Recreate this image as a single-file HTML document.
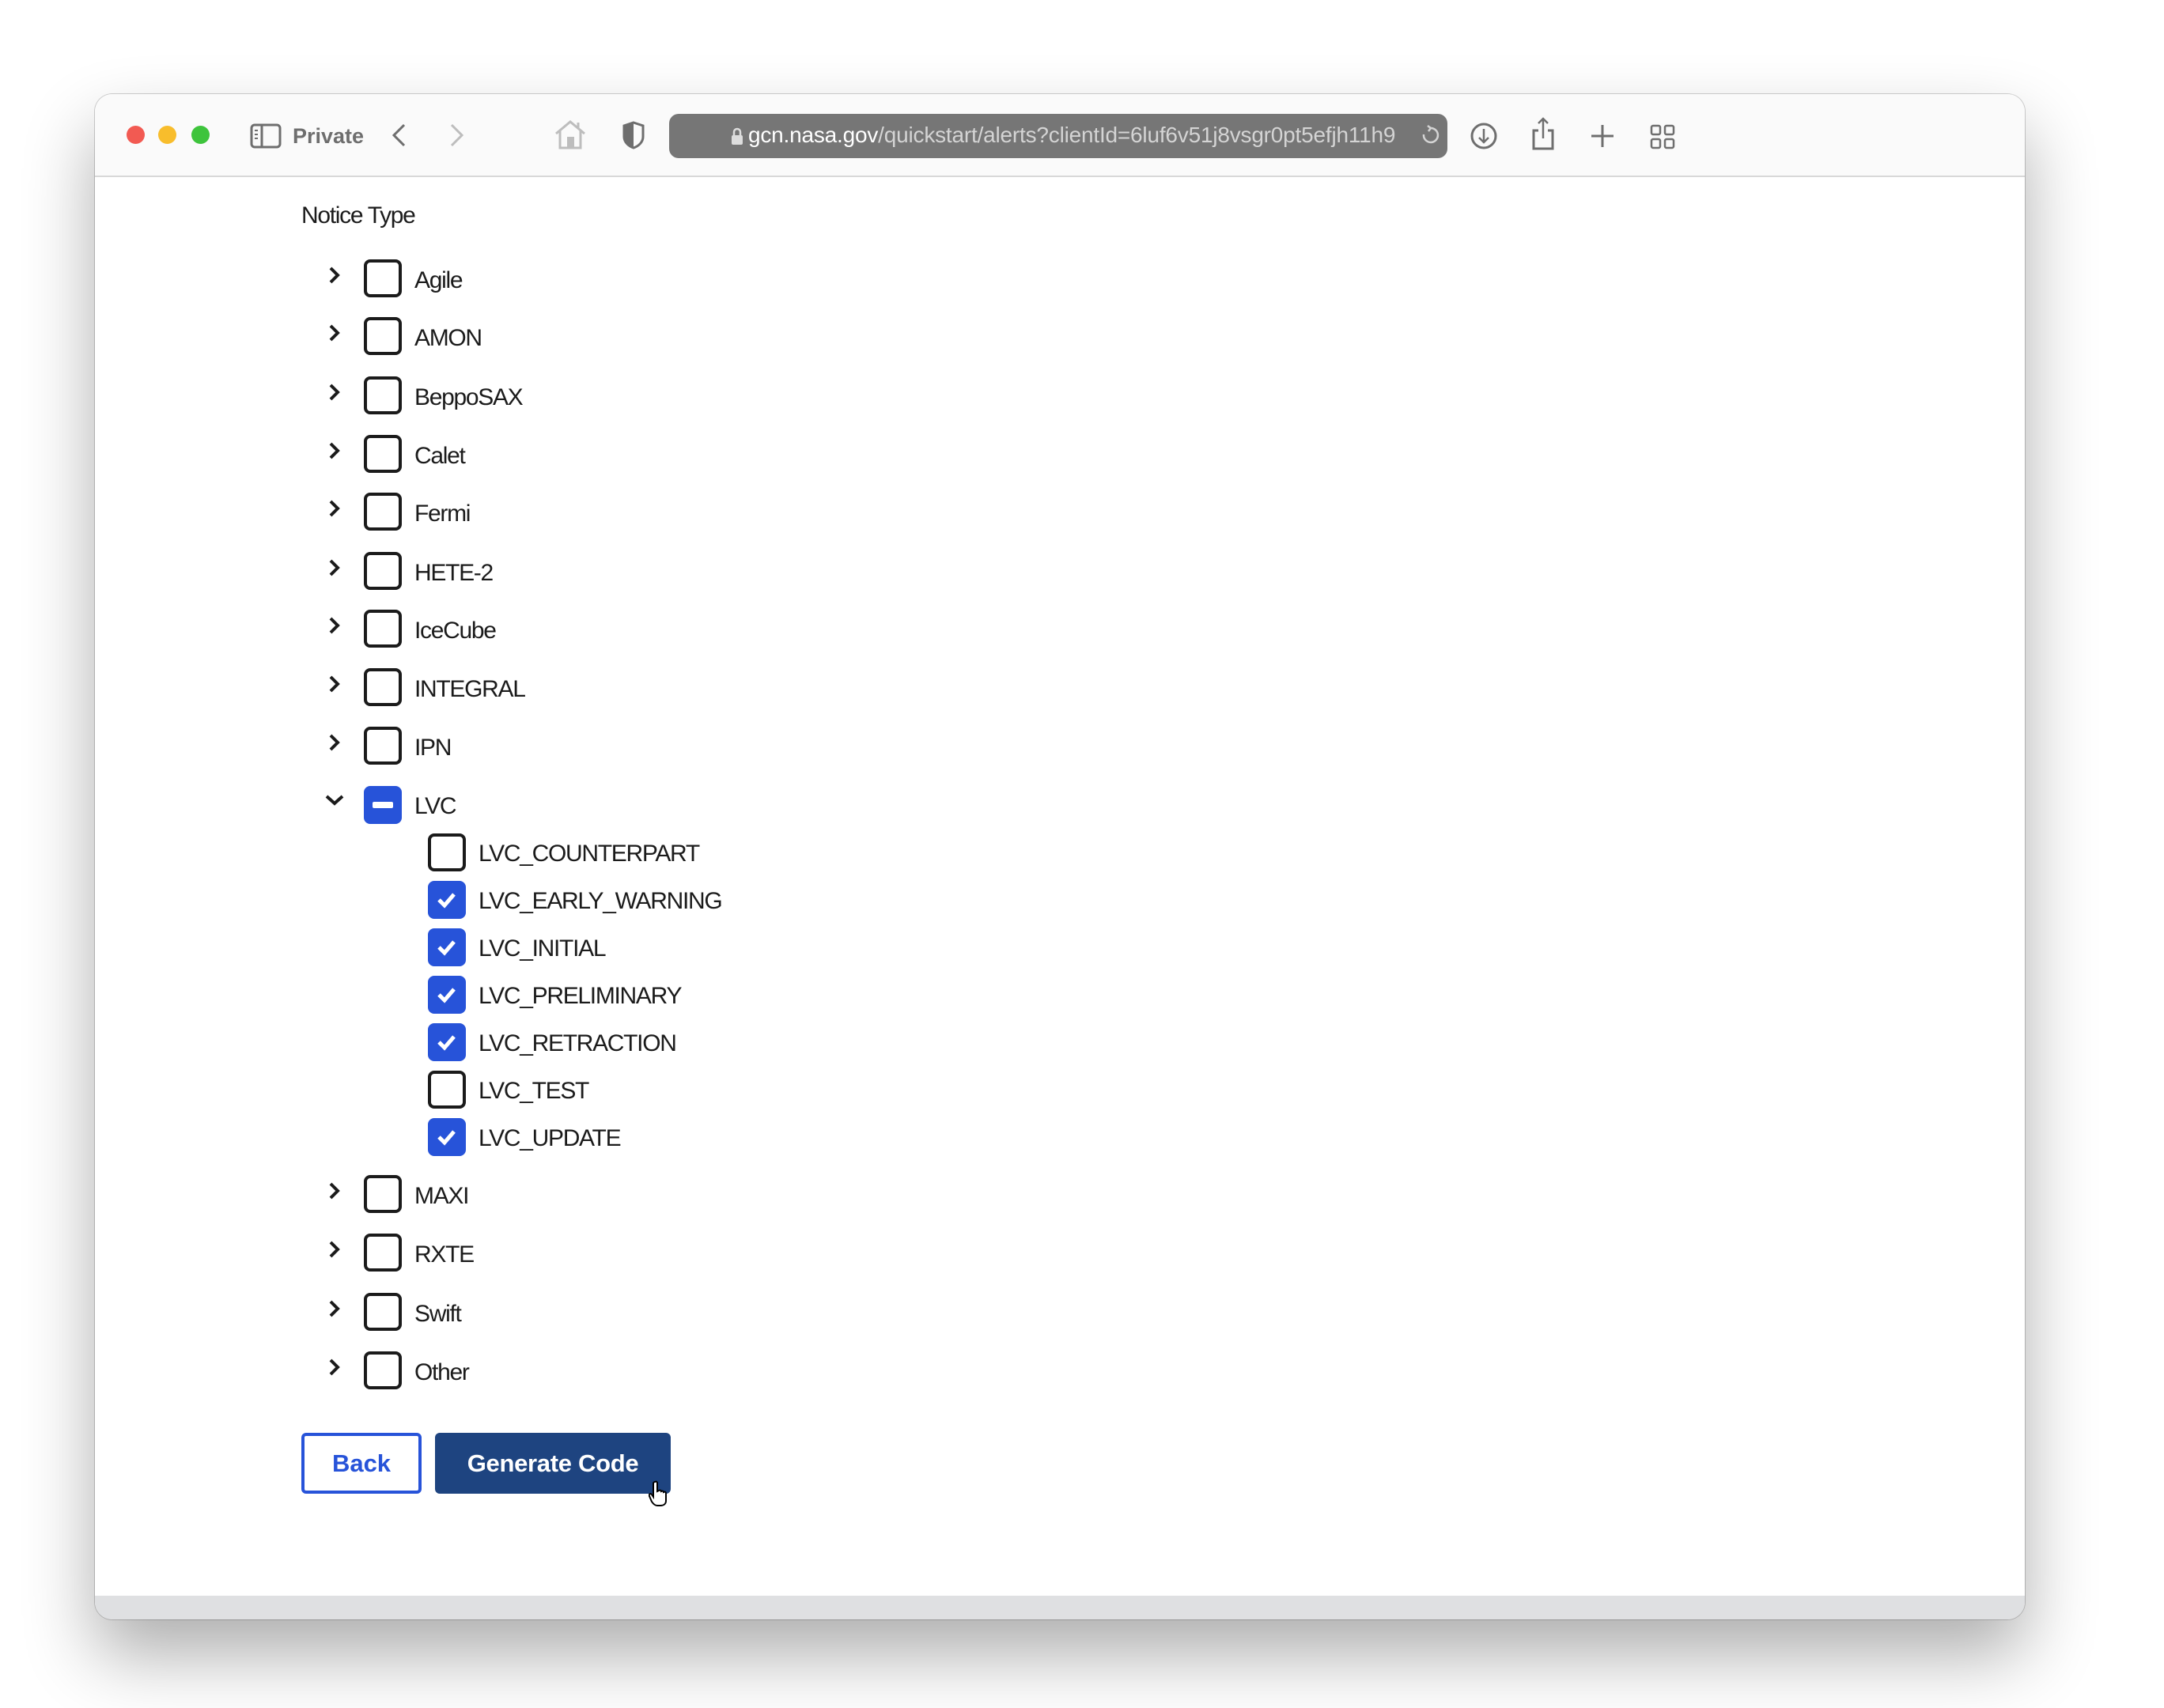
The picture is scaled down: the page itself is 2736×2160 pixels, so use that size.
<!DOCTYPE html>
<html><head><meta charset="utf-8"><style>
*{margin:0;padding:0;box-sizing:border-box}
body{width:2736px;height:2160px;background:#fff;position:relative;overflow:hidden;font-family:"Liberation Sans",sans-serif}
.win{position:absolute;left:120px;top:119px;width:2440px;height:1929px;border-radius:22px;background:#fff;box-shadow:0 45px 90px rgba(0,0,0,0.32),0 0 0 1px rgba(0,0,0,0.18);overflow:hidden}
.tb{position:absolute;left:0;top:0;width:100%;height:105px;background:#fafafa;border-bottom:2px solid #d8d8d8}
.dot{position:absolute;top:40px;width:23px;height:23px;border-radius:50%}
.url{position:absolute;left:726px;top:25px;width:984px;height:56px;background:#767676;border-radius:12px}
.urltext{position:absolute;left:100px;top:11px;font-size:28px;color:#d4d4d4;white-space:nowrap;letter-spacing:-0.2px}
.urltext b{color:#fff;font-weight:normal}
.bottom{position:absolute;left:0;top:1899px;width:100%;height:30px;background:#dfe0e2}
.t{position:absolute;font-size:30px;color:#1b1b1b;letter-spacing:-1.3px;line-height:36px;margin-top:3px}
.cb{position:absolute;width:48px;height:48px;border:4px solid #1b1b1b;border-radius:8px}
.cb.on{background:#2753d9;border-color:#2753d9}
.chev{position:absolute}
.btn{position:absolute;font-weight:bold;font-size:31px;text-align:center;border-radius:6px}
</style></head><body>
<div class="win">
 <div class="tb">
  <div class="dot" style="left:40px;background:#f25a52"></div>
  <div class="dot" style="left:80px;background:#f8bd2c"></div>
  <div class="dot" style="left:122px;background:#3ec43c"></div>
  <svg style="position:absolute;left:196px;top:37px" width="40" height="32" viewBox="0 0 40 32"><rect x="2" y="2" width="36" height="28" rx="4" fill="none" stroke="#6e6e6e" stroke-width="3"/><line x1="15" y1="2" x2="15" y2="30" stroke="#6e6e6e" stroke-width="3"/><line x1="6" y1="9" x2="10" y2="9" stroke="#6e6e6e" stroke-width="2"/><line x1="6" y1="14" x2="10" y2="14" stroke="#6e6e6e" stroke-width="2"/><line x1="6" y1="19" x2="10" y2="19" stroke="#6e6e6e" stroke-width="2"/></svg>
  <div style="position:absolute;left:250px;top:38px;font-size:27px;font-weight:bold;color:#6e6e6e">Private</div>
  <svg style="position:absolute;left:374px;top:37px" width="22" height="30"><polyline points="17,2 4,15 17,28" fill="none" stroke="#6e6e6e" stroke-width="3"/></svg>
  <svg style="position:absolute;left:446px;top:37px" width="22" height="30"><polyline points="5,2 18,15 5,28" fill="none" stroke="#bdbdbd" stroke-width="3"/></svg>
  <svg style="position:absolute;left:580px;top:32px" width="42" height="38" viewBox="0 0 42 38"><polyline points="3,18 21,3 39,18" fill="none" stroke="#bdbdbd" stroke-width="3"/><polyline points="8,14 8,36 34,36 34,14" fill="none" stroke="#bdbdbd" stroke-width="3"/><rect x="17" y="22" width="9" height="14" fill="#bdbdbd"/><line x1="31" y1="4" x2="31" y2="12" stroke="#bdbdbd" stroke-width="3"/></svg>
  <svg style="position:absolute;left:666px;top:34px" width="30" height="36" viewBox="0 0 30 36"><path d="M15 2 L27 6 L27 20 C27 27 21 32 15 34 C9 32 3 27 3 20 L3 6 Z" fill="none" stroke="#6e6e6e" stroke-width="3"/><path d="M15 2 L3 6 L3 20 C3 27 9 32 15 34 Z" fill="#6e6e6e"/></svg>
  <div class="url">
   <svg style="position:absolute;left:78px;top:16px" width="16" height="24" viewBox="0 0 16 24"><path d="M4 11 V7 a4 4 0 0 1 8 0 V11" fill="none" stroke="#ddd" stroke-width="2.5"/><rect x="1" y="11" width="14" height="12" rx="2" fill="#ddd"/></svg>
   <div class="urltext"><b>gcn.nasa.gov</b>/quickstart/alerts?clientId=6luf6v51j8vsgr0pt5efjh11h9</div>
   <svg style="position:absolute;left:950px;top:14px" width="24" height="28" viewBox="0 0 24 28"><path d="M12 4 A9 9 0 1 1 4 12" fill="none" stroke="#d4d4d4" stroke-width="2.5"/><polyline points="9,1 13,4 10,8" fill="none" stroke="#d4d4d4" stroke-width="2.5"/></svg>
  </div>
  <svg style="position:absolute;left:1738px;top:35px" width="36" height="36"><circle cx="18" cy="18" r="15" fill="none" stroke="#6e6e6e" stroke-width="3"/><line x1="18" y1="9" x2="18" y2="26" stroke="#6e6e6e" stroke-width="2.5"/><polyline points="12,20 18,26 24,20" fill="none" stroke="#6e6e6e" stroke-width="2.5"/></svg>
  <svg style="position:absolute;left:1815px;top:28px" width="32" height="44"><polyline points="10,18 4,18 4,41 28,41 28,18 22,18" fill="none" stroke="#6e6e6e" stroke-width="3"/><line x1="16" y1="3" x2="16" y2="28" stroke="#6e6e6e" stroke-width="2.5"/><polyline points="10,9 16,3 22,9" fill="none" stroke="#6e6e6e" stroke-width="2.5"/></svg>
  <svg style="position:absolute;left:1891px;top:38px" width="30" height="30"><line x1="15" y1="1" x2="15" y2="29" stroke="#6e6e6e" stroke-width="3"/><line x1="1" y1="15" x2="29" y2="15" stroke="#6e6e6e" stroke-width="3"/></svg>
  <svg style="position:absolute;left:1966px;top:38px" width="32" height="32"><rect x="2" y="2" width="11" height="11" rx="2" fill="none" stroke="#6e6e6e" stroke-width="2.5"/><rect x="19" y="2" width="11" height="11" rx="2" fill="none" stroke="#6e6e6e" stroke-width="2.5"/><rect x="2" y="19" width="11" height="11" rx="2" fill="none" stroke="#6e6e6e" stroke-width="2.5"/><rect x="19" y="19" width="11" height="11" rx="2" fill="none" stroke="#6e6e6e" stroke-width="2.5"/></svg>
 </div>
 <div class="bottom"></div>
</div>
<div class="t" style="left:381px;top:252px">Notice Type</div>

<svg class="chev" style="left:415px;top:336px" width="16" height="24"><polyline points="3,3 12,12 3,21" fill="none" stroke="#1b1b1b" stroke-width="4"/></svg><div class="cb" style="left:460px;top:328px"></div><div class="t" style="left:524px;top:334px">Agile</div>
<svg class="chev" style="left:415px;top:409px" width="16" height="24"><polyline points="3,3 12,12 3,21" fill="none" stroke="#1b1b1b" stroke-width="4"/></svg><div class="cb" style="left:460px;top:401px"></div><div class="t" style="left:524px;top:407px">AMON</div>
<svg class="chev" style="left:415px;top:484px" width="16" height="24"><polyline points="3,3 12,12 3,21" fill="none" stroke="#1b1b1b" stroke-width="4"/></svg><div class="cb" style="left:460px;top:476px"></div><div class="t" style="left:524px;top:482px">BeppoSAX</div>
<svg class="chev" style="left:415px;top:558px" width="16" height="24"><polyline points="3,3 12,12 3,21" fill="none" stroke="#1b1b1b" stroke-width="4"/></svg><div class="cb" style="left:460px;top:550px"></div><div class="t" style="left:524px;top:556px">Calet</div>
<svg class="chev" style="left:415px;top:631px" width="16" height="24"><polyline points="3,3 12,12 3,21" fill="none" stroke="#1b1b1b" stroke-width="4"/></svg><div class="cb" style="left:460px;top:623px"></div><div class="t" style="left:524px;top:629px">Fermi</div>
<svg class="chev" style="left:415px;top:706px" width="16" height="24"><polyline points="3,3 12,12 3,21" fill="none" stroke="#1b1b1b" stroke-width="4"/></svg><div class="cb" style="left:460px;top:698px"></div><div class="t" style="left:524px;top:704px">HETE-2</div>
<svg class="chev" style="left:415px;top:779px" width="16" height="24"><polyline points="3,3 12,12 3,21" fill="none" stroke="#1b1b1b" stroke-width="4"/></svg><div class="cb" style="left:460px;top:771px"></div><div class="t" style="left:524px;top:777px">IceCube</div>
<svg class="chev" style="left:415px;top:853px" width="16" height="24"><polyline points="3,3 12,12 3,21" fill="none" stroke="#1b1b1b" stroke-width="4"/></svg><div class="cb" style="left:460px;top:845px"></div><div class="t" style="left:524px;top:851px">INTEGRAL</div>
<svg class="chev" style="left:415px;top:927px" width="16" height="24"><polyline points="3,3 12,12 3,21" fill="none" stroke="#1b1b1b" stroke-width="4"/></svg><div class="cb" style="left:460px;top:919px"></div><div class="t" style="left:524px;top:925px">IPN</div>
<svg class="chev" style="left:410px;top:1004px" width="26" height="16"><polyline points="3,3 13,12 23,3" fill="none" stroke="#1b1b1b" stroke-width="4"/></svg><div class="cb on" style="left:460px;top:994px"><div style="position:absolute;left:7px;top:16px;width:26px;height:8px;background:#fff;border-radius:2px"></div></div><div class="t" style="left:524px;top:999px">LVC</div>

<div class="cb" style="left:541px;top:1054px"></div><div class="t" style="left:605px;top:1059px">LVC_COUNTERPART</div>
<div class="cb on" style="left:541px;top:1114px"><svg width="40" height="40" style="position:absolute;left:0;top:0"><polyline points="10,20 17,27 29,13" fill="none" stroke="#fff" stroke-width="5"/></svg></div><div class="t" style="left:605px;top:1119px">LVC_EARLY_WARNING</div>
<div class="cb on" style="left:541px;top:1174px"><svg width="40" height="40" style="position:absolute;left:0;top:0"><polyline points="10,20 17,27 29,13" fill="none" stroke="#fff" stroke-width="5"/></svg></div><div class="t" style="left:605px;top:1179px">LVC_INITIAL</div>
<div class="cb on" style="left:541px;top:1234px"><svg width="40" height="40" style="position:absolute;left:0;top:0"><polyline points="10,20 17,27 29,13" fill="none" stroke="#fff" stroke-width="5"/></svg></div><div class="t" style="left:605px;top:1239px">LVC_PRELIMINARY</div>
<div class="cb on" style="left:541px;top:1294px"><svg width="40" height="40" style="position:absolute;left:0;top:0"><polyline points="10,20 17,27 29,13" fill="none" stroke="#fff" stroke-width="5"/></svg></div><div class="t" style="left:605px;top:1299px">LVC_RETRACTION</div>
<div class="cb" style="left:541px;top:1354px"></div><div class="t" style="left:605px;top:1359px">LVC_TEST</div>
<div class="cb on" style="left:541px;top:1414px"><svg width="40" height="40" style="position:absolute;left:0;top:0"><polyline points="10,20 17,27 29,13" fill="none" stroke="#fff" stroke-width="5"/></svg></div><div class="t" style="left:605px;top:1419px">LVC_UPDATE</div>

<svg class="chev" style="left:415px;top:1494px" width="16" height="24"><polyline points="3,3 12,12 3,21" fill="none" stroke="#1b1b1b" stroke-width="4"/></svg><div class="cb" style="left:460px;top:1486px"></div><div class="t" style="left:524px;top:1492px">MAXI</div>
<svg class="chev" style="left:415px;top:1568px" width="16" height="24"><polyline points="3,3 12,12 3,21" fill="none" stroke="#1b1b1b" stroke-width="4"/></svg><div class="cb" style="left:460px;top:1560px"></div><div class="t" style="left:524px;top:1566px">RXTE</div>
<svg class="chev" style="left:415px;top:1643px" width="16" height="24"><polyline points="3,3 12,12 3,21" fill="none" stroke="#1b1b1b" stroke-width="4"/></svg><div class="cb" style="left:460px;top:1635px"></div><div class="t" style="left:524px;top:1641px">Swift</div>
<svg class="chev" style="left:415px;top:1717px" width="16" height="24"><polyline points="3,3 12,12 3,21" fill="none" stroke="#1b1b1b" stroke-width="4"/></svg><div class="cb" style="left:460px;top:1709px"></div><div class="t" style="left:524px;top:1715px">Other</div>

<div class="btn" style="left:381px;top:1812px;width:152px;height:77px;border:4px solid #2753d9;color:#2753d9;line-height:69px">Back</div>
<div class="btn" style="left:550px;top:1812px;width:298px;height:77px;background:#1e4480;color:#fff;line-height:77px;letter-spacing:-0.3px">Generate Code</div>
<svg style="position:absolute;left:820px;top:1872px" width="28" height="34" viewBox="0 0 28 34"><path d="M8 2 C10 1 11 2 11 4 L11 14 L13 13 C15 12 16 13 16 14 C18 13 19 14 19 15 C21 14 22 15 22 17 L22 26 C22 30 19 32 15 32 L11 32 C8 32 6 30 4 27 L1 20 C0 18 2 16 4 18 L6 21 L6 4 C6 3 7 2 8 2 Z" fill="#fff" stroke="#000" stroke-width="2"/></svg>
</body></html>
